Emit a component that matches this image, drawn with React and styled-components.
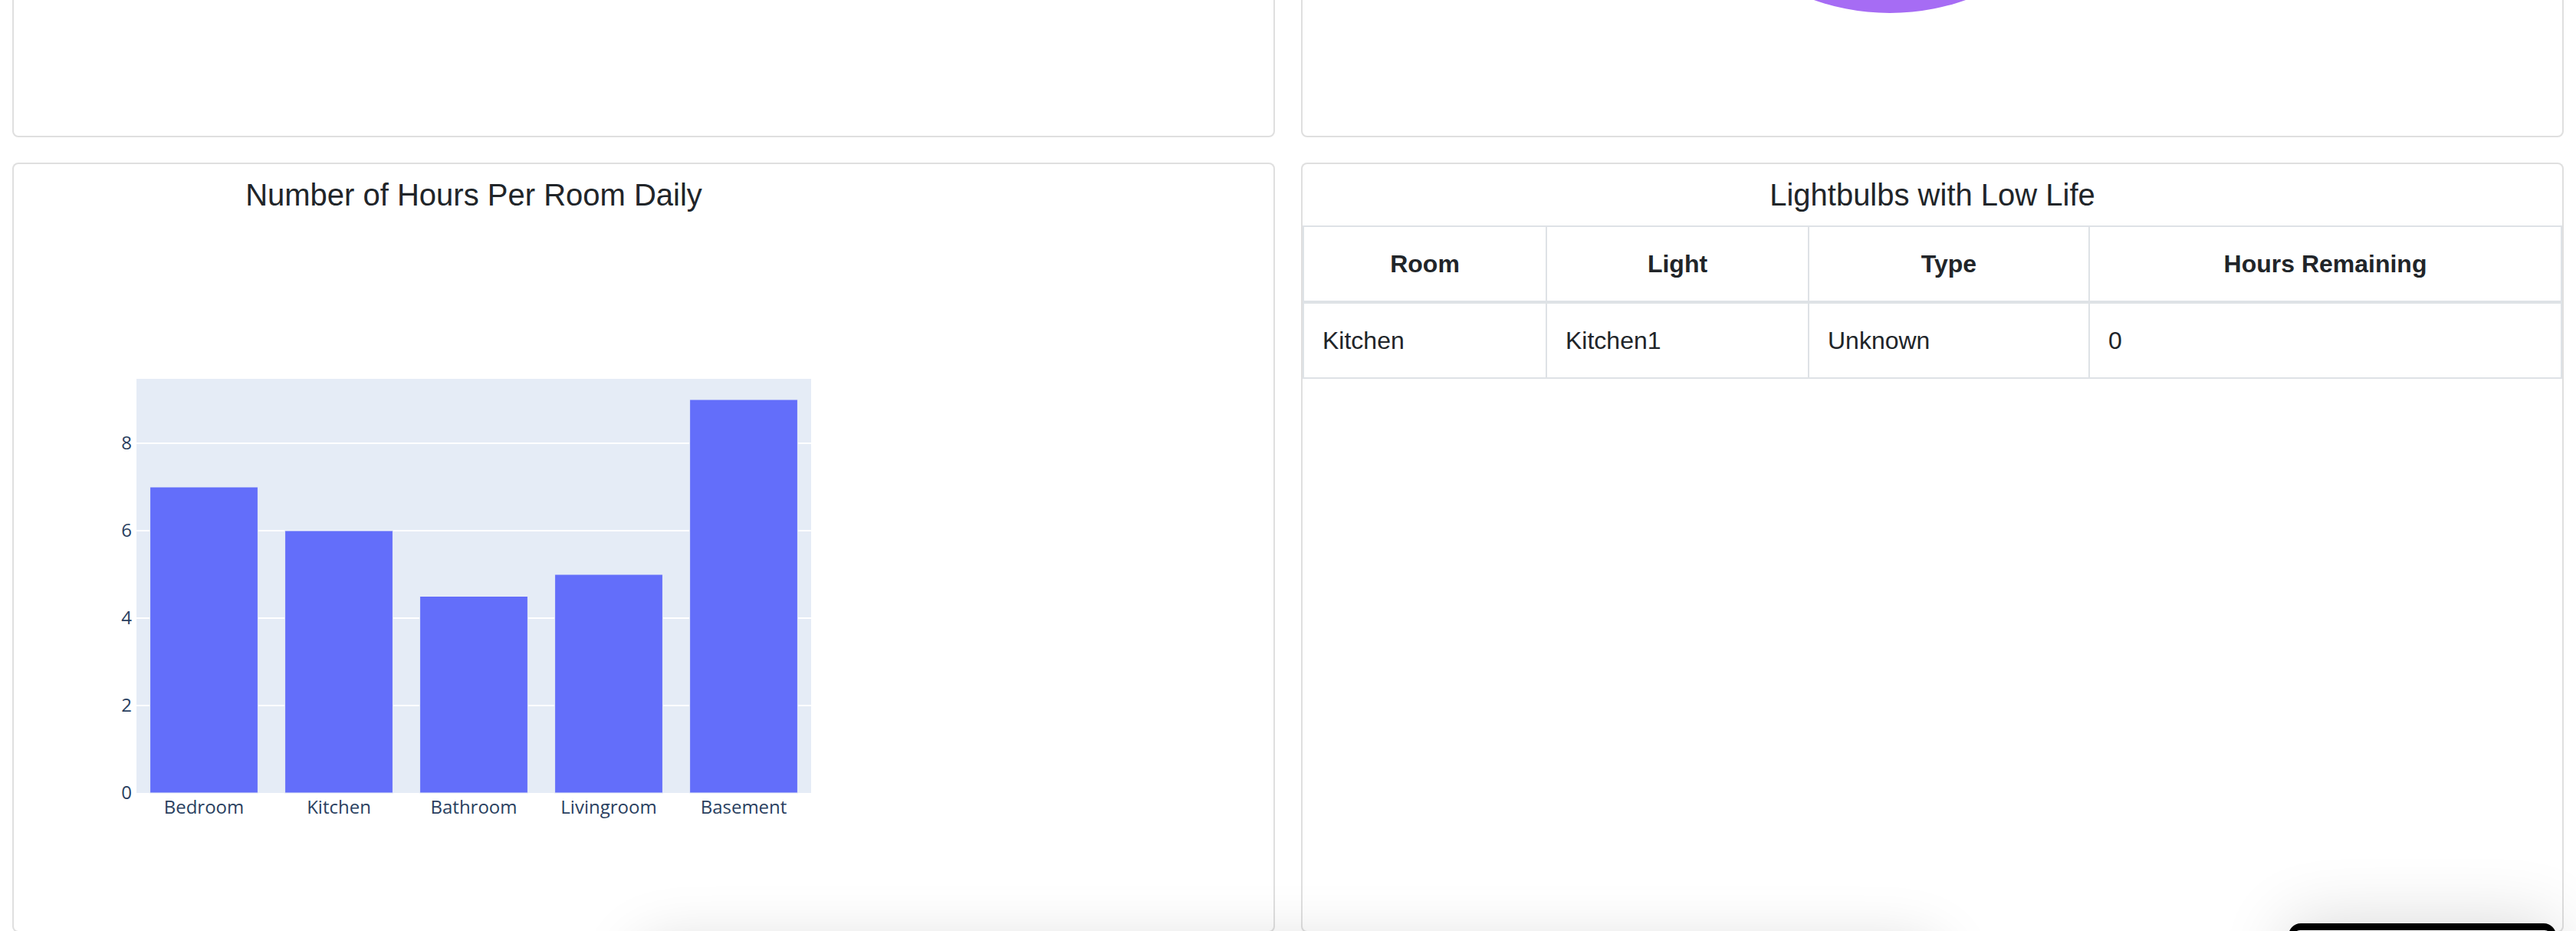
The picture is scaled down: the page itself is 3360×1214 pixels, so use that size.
import React from 'react';
import styled, { createGlobalStyle } from 'styled-components';

const hours = [
	{ room: 'Bedroom', value: 7 },
	{ room: 'Kitchen', value: 6 },
	{ room: 'Bathroom', value: 4.5 },
	{ room: 'Livingroom', value: 5 },
	{ room: 'Basement', value: 9 },
];

const lowLife = [
	{ room: 'Kitchen', light: 'Kitchen1', type: 'Unknown', hours: 0 },
];

const columns = [
	{ label: 'Room', width: 317 },
	{ label: 'Light', width: 342 },
	{ label: 'Type', width: 366 },
	{ label: 'Hours Remaining' },
];

// plotly-ish figure geometry (1200x900, margins 160/160/200/160)
const PLOT = { left: 160, top: 200, width: 880, height: 540, max: 9.4737 };

const HoursChart = () => {
	const slot = PLOT.width / hours.length;
	const barW = slot * 0.8;
	const y = v => PLOT.top + PLOT.height - (v / PLOT.max) * PLOT.height;

	return (
		<Figure width="1200" height="900" viewBox="0 0 1200 900">
			<rect x={PLOT.left} y={PLOT.top} width={PLOT.width} height={PLOT.height} fill="#e5ecf6" />
			{[2, 4, 6, 8].map(t => (
				<line key={t} x1={PLOT.left} x2={PLOT.left + PLOT.width} y1={y(t)} y2={y(t)} stroke="#fff" strokeWidth="2" />
			))}
			{hours.map((h, i) => (
				<rect
					key={h.room}
					x={PLOT.left + slot * i + (slot - barW) / 2}
					y={y(h.value)}
					width={barW}
					height={y(0) - y(h.value)}
					fill="#636efa"
					stroke="#e5ecf6"
					strokeWidth="1"
				/>
			))}
			{[0, 2, 4, 6, 8].map(t => (
				<TickText key={t} x={PLOT.left - 6} y={y(t) + 8} textAnchor="end">{t}</TickText>
			))}
			{hours.map((h, i) => (
				<TickText key={h.room} x={PLOT.left + slot * i + slot / 2} y={767} textAnchor="middle">{h.room}</TickText>
			))}
		</Figure>
	);
}

const App = () => {
	return (
		<>
			<GlobalStyle />
			<Page>
				<Card />
				<Card>
					<PieFigure width="1200" height="839" viewBox="0 0 1200 839">
						<circle cx="766" cy="540" r="297" fill="#a66cf4" />
					</PieFigure>
				</Card>

				<Card $tall>
					<ChartBlock>
						<CardTitle>Number of Hours Per Room Daily</CardTitle>
						<HoursChart />
					</ChartBlock>
				</Card>

				<Card $tall>
					<CardTitle>Lightbulbs with Low Life</CardTitle>
					<Table>
						<colgroup>
							{columns.map(c => <Col key={c.label} $w={c.width} />)}
						</colgroup>
						<thead>
							<tr>
								{columns.map(c => <Th key={c.label}>{c.label}</Th>)}
							</tr>
						</thead>
						<tbody>
							{lowLife.map(row => (
								<tr key={row.light}>
									<Td>{row.room}</Td>
									<Td>{row.light}</Td>
									<Td>{row.type}</Td>
									<Td>{row.hours}</Td>
								</tr>
							))}
						</tbody>
					</Table>
				</Card>
			</Page>

			<BottomSheet />
			<Launcher>
				<LauncherBody />
			</Launcher>
		</>
	);
}

const GlobalStyle = createGlobalStyle`
	html, body {
		margin: 0;
		padding: 0;
		background: #fff;
	}
	body {
		font-family: "Liberation Sans", Arial, sans-serif;
		color: #212529;
		overflow: hidden;
	}
`;

// page is scrolled: the top row of cards sits mostly above the viewport
const Page = styled.div`
	display: grid;
	grid-template-columns: 1fr 1fr;
	align-items: start;
	column-gap: 34px;
	row-gap: 33px;
	padding: 0 16px;
	margin-top: -822px;
`;

const Card = styled.div`
	box-sizing: border-box;
	height: ${props => (props.$tall ? '1004px' : '1001px')};
	background: #fff;
	border: 2px solid rgba(0, 0, 0, 0.125);
	border-radius: 8px;
	overflow: hidden;
`;

const ChartBlock = styled.div`
	width: 1200px;
`;

const CardTitle = styled.h5`
	margin: 16px 0 16px;
	font-size: 40px;
	font-weight: 500;
	line-height: 48px;
	text-align: center;
	color: #212529;
`;

const Figure = styled.svg`
	display: block;
`;

const PieFigure = styled.svg`
	display: block;
`;

const TickText = styled.text`
	font-family: "Open Sans", "Liberation Sans", sans-serif;
	font-size: 24px;
	fill: #2a3f5f;
`;

const Table = styled.table`
	width: 100%;
	border-collapse: collapse;
	font-size: 32px;
	line-height: 48px;
	color: #212529;
`;

const Col = styled.col`
	width: ${props => (props.$w ? `${props.$w}px` : 'auto')};
`;

const Th = styled.th`
	padding: 24px;
	border: 2px solid #dee2e6;
	border-bottom-width: 4px;
	font-weight: bold;
	text-align: center;
`;

const Td = styled.td`
	padding: 24px;
	border: 2px solid #dee2e6;
	text-align: left;
`;

const BottomSheet = styled.div`
	position: fixed;
	left: 830px;
	top: 1230px;
	width: 1700px;
	height: 300px;
	background: #fff;
	border-radius: 32px;
	box-shadow: 0 0 80px rgba(0, 0, 0, 0.15);
`;

const Launcher = styled.div`
	position: fixed;
	left: 2985px;
	top: 1204px;
	width: 349px;
	height: 200px;
	box-sizing: border-box;
	padding: 9px 7px 0;
	background: #000;
	border-radius: 16px 16px 0 0;
	box-shadow: 0 0 90px rgba(0, 0, 0, 0.16);
`;

const LauncherBody = styled.div`
	height: 100%;
	background: #fff;
	border-radius: 8px 8px 0 0;
`;

export default App;
